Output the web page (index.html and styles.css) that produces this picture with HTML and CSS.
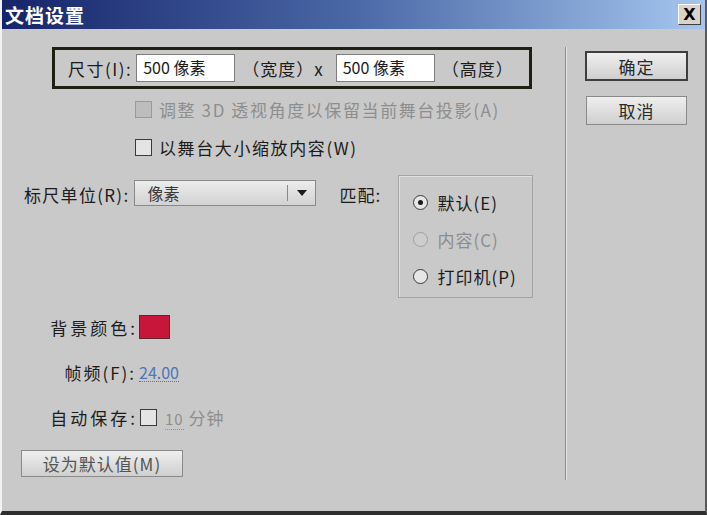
FILE: index.html
```html
<!DOCTYPE html>
<html lang="zh-CN">
  <head>
    <meta charset="UTF-8" />
    <title>文档设置</title>
    <link rel="stylesheet" href="styles.css">
  </head>
  <body>
    <div class="window">
      <!-- title bar -->
      <div class="titlebar">
        <span class="title">文档设置</span>
        <span class="close-btn">X</span>
      </div>
      <div class="dialog">
        <div class="main">
          <div class="size-box">
            <span class="label">尺寸(I):</span>
            <span class="field">500 像素</span>
            <span class="unit">（宽度）x</span>
            <span class="field">500 像素</span>
            <span class="unit">（高度）</span>
          </div>
          <div class="check-row disabled">
            <span class="box"></span>调整 3D 透视角度以保留当前舞台投影(A)
          </div>
          <div class="check-row second">
            <span class="box"></span>以舞台大小缩放内容(W)
          </div>
          <div class="ruler-row">
            <span class="label ruler-label">标尺单位(R):</span>
            <span class="select">
              <span class="select-text">像素</span>
              <span class="arrow"></span>
            </span>
            <span class="match-label">匹配:</span>
            <div class="radio-group">
              <div class="radio checked"><span class="dot"></span>默认(E)</div>
              <div class="radio disabled"><span class="dot"></span>内容(C)</div>
              <div class="radio"><span class="dot"></span>打印机(P)</div>
            </div>
          </div>
          <div class="prop-row color-row">
            <span class="prop-label">背景颜色:</span>
            <span class="swatch"></span>
          </div>
          <div class="prop-row fps-row">
            <span class="prop-label">帧频(F):</span>
            <span class="link">24.00</span>
          </div>
          <div class="prop-row save-row">
            <span class="prop-label">自动保存:</span>
            <span class="box"></span>
            <span class="minutes"><span class="num">10</span> 分钟</span>
          </div>
          <button class="btn default-btn" type="button">设为默认值(M)</button>
        </div>
        <div class="side">
          <button class="btn ok-btn" type="button">确定</button>
          <button class="btn cancel-btn" type="button">取消</button>
        </div>
      </div>
    </div>
  </body>
</html>
```

FILE: styles.css
```css
html,
body {
  margin: 0;
  padding: 0;
}
body {
  width: 707px;
  height: 515px;
  overflow: hidden;
  background: #c9c9c9;
  font-family: "Noto Sans CJK SC", "Noto Sans", sans-serif;
  font-size: 17px;
  color: #1c1c1c;
  white-space: nowrap;
}
.window {
  box-sizing: border-box;
  width: 707px;
  height: 515px;
  border-left: 2px solid #f2f2f2;
  border-right: 2px solid #5a5a5a;
  border-bottom: 4px solid #2e2e2e;
  background: #c9c9c9;
}
.titlebar {
  height: 29px;
  display: flex;
  align-items: center;
  justify-content: space-between;
  padding: 0 4px 0 3px;
  background: linear-gradient(to right, #16246a, #4a68a6 50%, #a4c6ee);
}
.title {
  color: #ffffff;
  font-weight: bold;
  font-size: 19px;
  letter-spacing: 1px;
}
.close-btn {
  box-sizing: border-box;
  width: 23px;
  height: 21px;
  display: flex;
  align-items: center;
  justify-content: center;
  background: #d8d4cc;
  border: 1px solid;
  border-color: #ffffff #404040 #404040 #ffffff;
  font-family: "DejaVu Sans", sans-serif;
  font-weight: bold;
  font-size: 16px;
  color: #000;
}
.dialog {
  display: flex;
  height: 482px;
}
.main {
  width: 563px;
  box-sizing: border-box;
  padding-top: 18px;
}
.side {
  display: flex;
  flex-direction: column;
  align-items: flex-start;
  margin-top: 18px;
  height: 433px;
  border-left: 1px solid #8e8e8e;
  box-shadow: inset 1px 0 0 #e4e4e4;
  padding-left: 19px;
}

/* size row */
.size-box {
  box-sizing: border-box;
  margin-left: 50px;
  width: 480px;
  height: 42px;
  border: 3px solid #1f1f14;
  display: flex;
  align-items: center;
  padding-left: 13px;
}
.size-box > span {
  flex-shrink: 0;
}
.label {
  letter-spacing: 1.5px;
}
.field {
  box-sizing: border-box;
  width: 99px;
  height: 28px;
  margin-left: 4px;
  background: #ffffff;
  border: 1px solid #7e7e7e;
  padding-left: 6px;
  font-size: 16px;
  line-height: 25px;
}
.unit {
  margin: 0 8px 0 7px;
  letter-spacing: 1px;
}

/* checkboxes */
.check-row {
  display: flex;
  align-items: center;
  height: 20px;
  margin-top: 10px;
  margin-left: 133px;
  letter-spacing: 1.6px;
}
.check-row .box {
  margin-right: 7px;
}
.check-row.second {
  margin-top: 18px;
}
.box {
  box-sizing: border-box;
  width: 17px;
  height: 17px;
  border: 1px solid #3a3a3a;
  background: #e4e4e4;
  margin-right: 9px;
}
.disabled {
  color: #8e8e8e;
}
.disabled .box {
  border-color: #9a9a9a;
  background: #bdbdbd;
}

/* ruler */
.ruler-row {
  display: flex;
  align-items: flex-start;
  margin-top: 15px;
  margin-left: 22px;
}
.ruler-label {
  margin-top: 10px;
  letter-spacing: 1.3px;
}
.select {
  box-sizing: border-box;
  margin-top: 8px;
  margin-left: 5px;
  width: 182px;
  height: 26px;
  display: flex;
  align-items: center;
  border: 1px solid #8a8a8a;
  background: linear-gradient(#ececec, #d2d2d2);
}
.select-text {
  flex: 1;
  padding-left: 12px;
  font-size: 16px;
  color: #3a3a3a;
}
.arrow {
  width: 27px;
  height: 16px;
  border-left: 1px solid #8a8a8a;
  position: relative;
}
.arrow::after {
  content: "";
  position: absolute;
  left: 9px;
  top: 5px;
  border-left: 5px solid transparent;
  border-right: 5px solid transparent;
  border-top: 6px solid #1a1a1a;
}
.match-label {
  margin-top: 10px;
  margin-left: 23px;
  width: 59px;
  letter-spacing: 1px;
}
.radio-group {
  box-sizing: border-box;
  width: 135px;
  height: 123px;
  margin-top: 3px;
  border: 1px solid #a4a4a4;
  box-shadow: inset 1px 1px 0 #e0e0e0;
  padding: 14px 0 0 14px;
}
.radio {
  display: flex;
  align-items: center;
  height: 24px;
  margin-bottom: 13px;
  letter-spacing: 1px;
}
.dot {
  box-sizing: border-box;
  width: 15px;
  height: 15px;
  border: 1px solid #3a3a3a;
  border-radius: 50%;
  background: #e6e6e6;
  margin-right: 9px;
  display: flex;
  align-items: center;
  justify-content: center;
}
.radio.checked .dot::after {
  content: "";
  width: 5px;
  height: 5px;
  border-radius: 50%;
  background: #1a1a1a;
}
.radio.disabled .dot {
  border-color: #a0a0a0;
  background: #cdcdcd;
}

/* properties */
.prop-row {
  display: flex;
  align-items: center;
  height: 24px;
}
.prop-label {
  width: 136px;
  text-align: right;
  letter-spacing: 3px;
  margin-right: 1px;
}
.color-row {
  margin-top: 17px;
}
.swatch {
  box-sizing: border-box;
  width: 31px;
  height: 24px;
  background: #c8163a;
  border: 1px solid #5a2a2a;
}
.fps-row {
  margin-top: 21px;
}
.fps-row .prop-label {
  width: 134px;
  letter-spacing: 2px;
}
.link {
  color: #4a78b8;
  font-size: 16px;
  border-bottom: 1px dotted #4a78b8;
  line-height: 18px;
  margin-left: 2px;
}
.save-row {
  margin-top: 21px;
}
.save-row .box {
  margin-left: 1px;
  margin-right: 8px;
}
.minutes {
  color: #8e8e8e;
  letter-spacing: 1px;
}
.num {
  border-bottom: 1px dotted #8e8e8e;
  font-size: 15px;
}

/* buttons */
.btn {
  box-sizing: border-box;
  font-family: inherit;
  font-size: 17px;
  color: #2a2a2a;
  background: linear-gradient(#efefef, #cfcfcf);
  border: 1px solid #8a8a8a;
  letter-spacing: 1px;
  padding: 0;
}
.default-btn {
  display: block;
  margin-top: 21px;
  margin-left: 19px;
  width: 162px;
  height: 27px;
  color: #555;
}
.ok-btn {
  width: 103px;
  height: 30px;
  margin-top: 4px;
  border: 2px solid #3e3e3e;
}
.cancel-btn {
  width: 101px;
  height: 29px;
  margin-top: 15px;
  margin-left: 1px;
}
```
